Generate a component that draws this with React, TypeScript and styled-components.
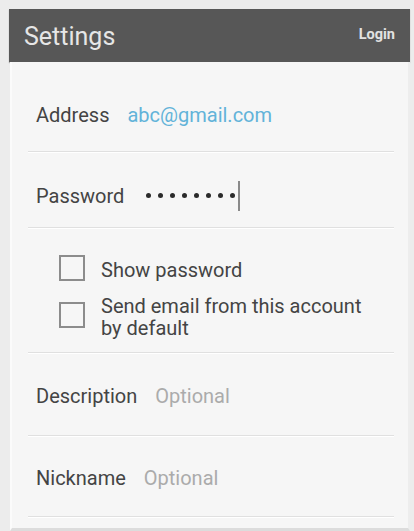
import React from "react";
import styled, { createGlobalStyle } from "styled-components";

const GlobalStyle = createGlobalStyle`
  html, body {
    margin: 0;
    padding: 0;
    background: #ececec;
    font-family: Roboto, "Noto Sans", "Liberation Sans", sans-serif;
  }
`;

const Screen = styled.div`
  width: 414px;
  height: 531px;
  padding: 9px 4px 0 9px;
  box-sizing: border-box;
  display: flex;
  flex-direction: column;
  overflow: hidden;
`;

const ActionBar = styled.div`
  height: 53px;
  flex-shrink: 0;
  background: #575757;
  display: flex;
  align-items: center;
  justify-content: space-between;
  padding: 0 15px 0 15px;
  box-shadow: 0 1px 1px rgba(0, 0, 0, 0.25);
`;

const Title = styled.div`
  color: #e6e6e6;
  font-size: 25px;
  margin-top: 1px;
`;

const LoginButton = styled.div`
  color: #e2e2e2;
  font-size: 14.5px;
  font-weight: 700;
  margin-top: -2px;
`;

const Panel = styled.div`
  flex: 1;
  margin-left: 1px;
  background: #f6f6f6;
  border-left: 2px solid #fbfbfb;
  border-right: 2px solid #ededed;
  border-bottom: 3px solid #dcdcdc;
  padding: 0 14px 0 16px;
  display: flex;
  flex-direction: column;
`;

const Row = styled.div<{ h: number; offset?: number }>`
  height: ${(p) => p.h}px;
  flex-shrink: 0;
  box-sizing: border-box;
  display: flex;
  align-items: center;
  padding: ${(p) => p.offset ?? 6}px 0 0 8px;
  border-bottom: 1px solid #e0e0e0;
  box-shadow: 0 1px 0 #ffffff;
`;

const Label = styled.span`
  color: #444;
  font-size: 20px;
  margin-right: 18px;
`;

const Value = styled.span<{ tone: "link" | "hint" }>`
  font-size: 20px;
  color: ${(p) => (p.tone === "link" ? "#62b3d9" : "#ababab")};
`;

const Dots = styled.span`
  display: flex;
  align-items: center;
  gap: 7px;
  margin-left: 4px;
`;

const Dot = styled.span`
  width: 5px;
  height: 5px;
  border-radius: 50%;
  background: #2b2b2b;
`;

const Cursor = styled.span`
  width: 2px;
  height: 30px;
  margin-left: 3px;
  background: #8a8a8a;
`;

const Checks = styled.div`
  height: 125px;
  flex-shrink: 0;
  box-sizing: border-box;
  padding: 27px 0 0 31px;
  display: flex;
  flex-direction: column;
  gap: 14px;
  border-bottom: 1px solid #e0e0e0;
  box-shadow: 0 1px 0 #ffffff;
`;

const CheckRow = styled.div`
  display: flex;
  align-items: flex-start;
  gap: 16px;
`;

const Box = styled.span<{ drop: number }>`
  width: 22px;
  height: 22px;
  flex-shrink: 0;
  margin-top: ${(p) => p.drop}px;
  border: 2px solid #8c8c8c;
`;

const CheckText = styled.span<{ drop: number }>`
  color: #444;
  font-size: 20px;
  line-height: 22px;
  margin-top: ${(p) => p.drop}px;
  white-space: nowrap;
`;

export default function App() {
  return (
    <Screen>
      <GlobalStyle />
      <ActionBar>
        <Title>Settings</Title>
        <LoginButton>Login</LoginButton>
      </ActionBar>
      <Panel>
        <Row h={90} offset={16}>
          <Label>Address</Label>
          <Value tone="link">abc@gmail.com</Value>
        </Row>
        <Row h={76} offset={12}>
          <Label>Password</Label>
          <Dots>
            {Array.from({ length: 8 }).map((_, i) => (
              <Dot key={i} />
            ))}
          </Dots>
          <Cursor />
        </Row>
        <Checks>
          <CheckRow>
            <Box drop={0} />
            <CheckText drop={4}>Show password</CheckText>
          </CheckRow>
          <CheckRow>
            <Box drop={7} />
            <CheckText drop={0}>
              Send email from this account
              <br />
              by default
            </CheckText>
          </CheckRow>
        </Checks>
        <Row h={83} offset={4}>
          <Label>Description</Label>
          <Value tone="hint">Optional</Value>
        </Row>
        <Row h={81} offset={4}>
          <Label>Nickname</Label>
          <Value tone="hint">Optional</Value>
        </Row>
      </Panel>
    </Screen>
  );
}
